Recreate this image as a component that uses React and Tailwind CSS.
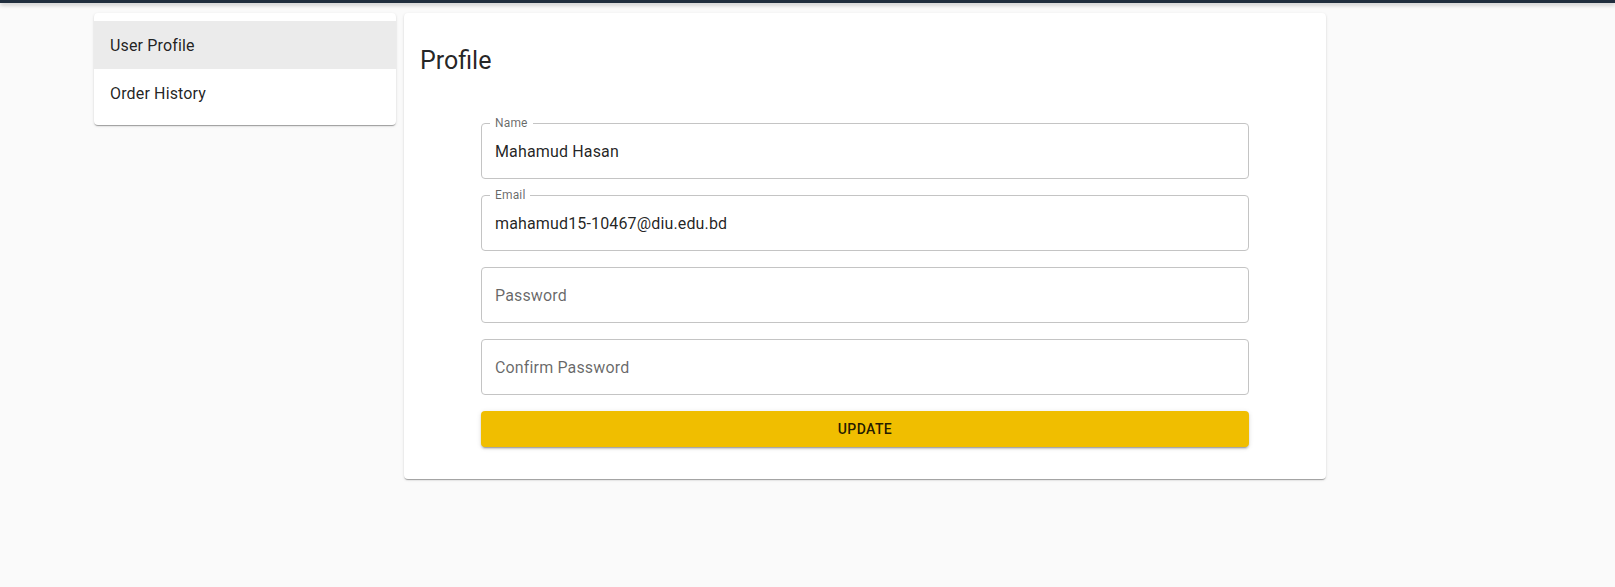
import { useState } from 'react';

const Field = ({ label, value, placeholder, type = 'text' }) => {
  const [val, setVal] = useState(value || '');
  return (
    <div className="relative h-14 rounded border border-[#c4c4c4] bg-white">
      {label && (
        <span className="absolute left-[8px] top-[-8px] bg-white px-[5px] text-[12px] leading-[15px] tracking-[0.15px] text-[rgba(0,0,0,0.6)]">
          {label}
        </span>
      )}
      <input
        type={type}
        value={val}
        onChange={(e) => setVal(e.target.value)}
        placeholder={placeholder}
        className="h-full w-full bg-transparent px-[13px] pt-px text-[16px] tracking-[0.15px] text-[rgba(0,0,0,0.87)] outline-none placeholder:text-[rgba(0,0,0,0.6)]"
      />
    </div>
  );
};

const App = () => {
  const [active, setActive] = useState(0);
  const items = ['User Profile', 'Order History'];

  return (
    <div className="min-h-screen bg-[#fafafa] font-['Roboto',sans-serif] text-[rgba(0,0,0,0.87)]">
      <div className="h-[3px] bg-[#1f2d3d] shadow-[0_2px_4px_rgba(0,0,0,0.25)]" />

      <div className="flex items-start gap-2 pl-[94px] pt-[10px]">
        <div className="w-[302px] rounded bg-white py-2 shadow-[0_2px_1px_-1px_rgba(0,0,0,0.2),0_1px_1px_0_rgba(0,0,0,0.14),0_1px_3px_0_rgba(0,0,0,0.12)]">
          {items.map((item, i) => (
            <div
              key={item}
              onClick={() => setActive(i)}
              className={`flex h-12 cursor-pointer items-center px-4 pt-[2px] text-[16px] tracking-[0.15px] ${active === i ? 'bg-[#ebebeb]' : 'bg-white'}`}
            >
              {item}
            </div>
          ))}
        </div>

        <div className="w-[922px] rounded bg-white p-4 pb-8 shadow-[0_2px_1px_-1px_rgba(0,0,0,0.2),0_1px_1px_0_rgba(0,0,0,0.14),0_1px_3px_0_rgba(0,0,0,0.12)]">
          <h1 className="mt-[16px] h-8 text-[25px] leading-8 font-normal">Profile</h1>

          <form className="mx-auto mt-[46px] flex w-[768px] flex-col gap-4" onSubmit={(e) => e.preventDefault()}>
            <Field label="Name" value="Mahamud Hasan" />
            <Field label="Email" value="mahamud15-10467@diu.edu.bd" />
            <Field placeholder="Password" type="password" />
            <Field placeholder="Confirm Password" type="password" />
            <button
              type="submit"
              className="h-9 rounded bg-[#f0be00] text-[14px] font-medium tracking-[0.4px] text-[rgba(0,0,0,0.87)] uppercase shadow-[0_3px_1px_-2px_rgba(0,0,0,0.2),0_2px_2px_0_rgba(0,0,0,0.14),0_1px_5px_0_rgba(0,0,0,0.12)]"
            >
              Update
            </button>
          </form>
        </div>
      </div>
    </div>
  );
};

export default App;
